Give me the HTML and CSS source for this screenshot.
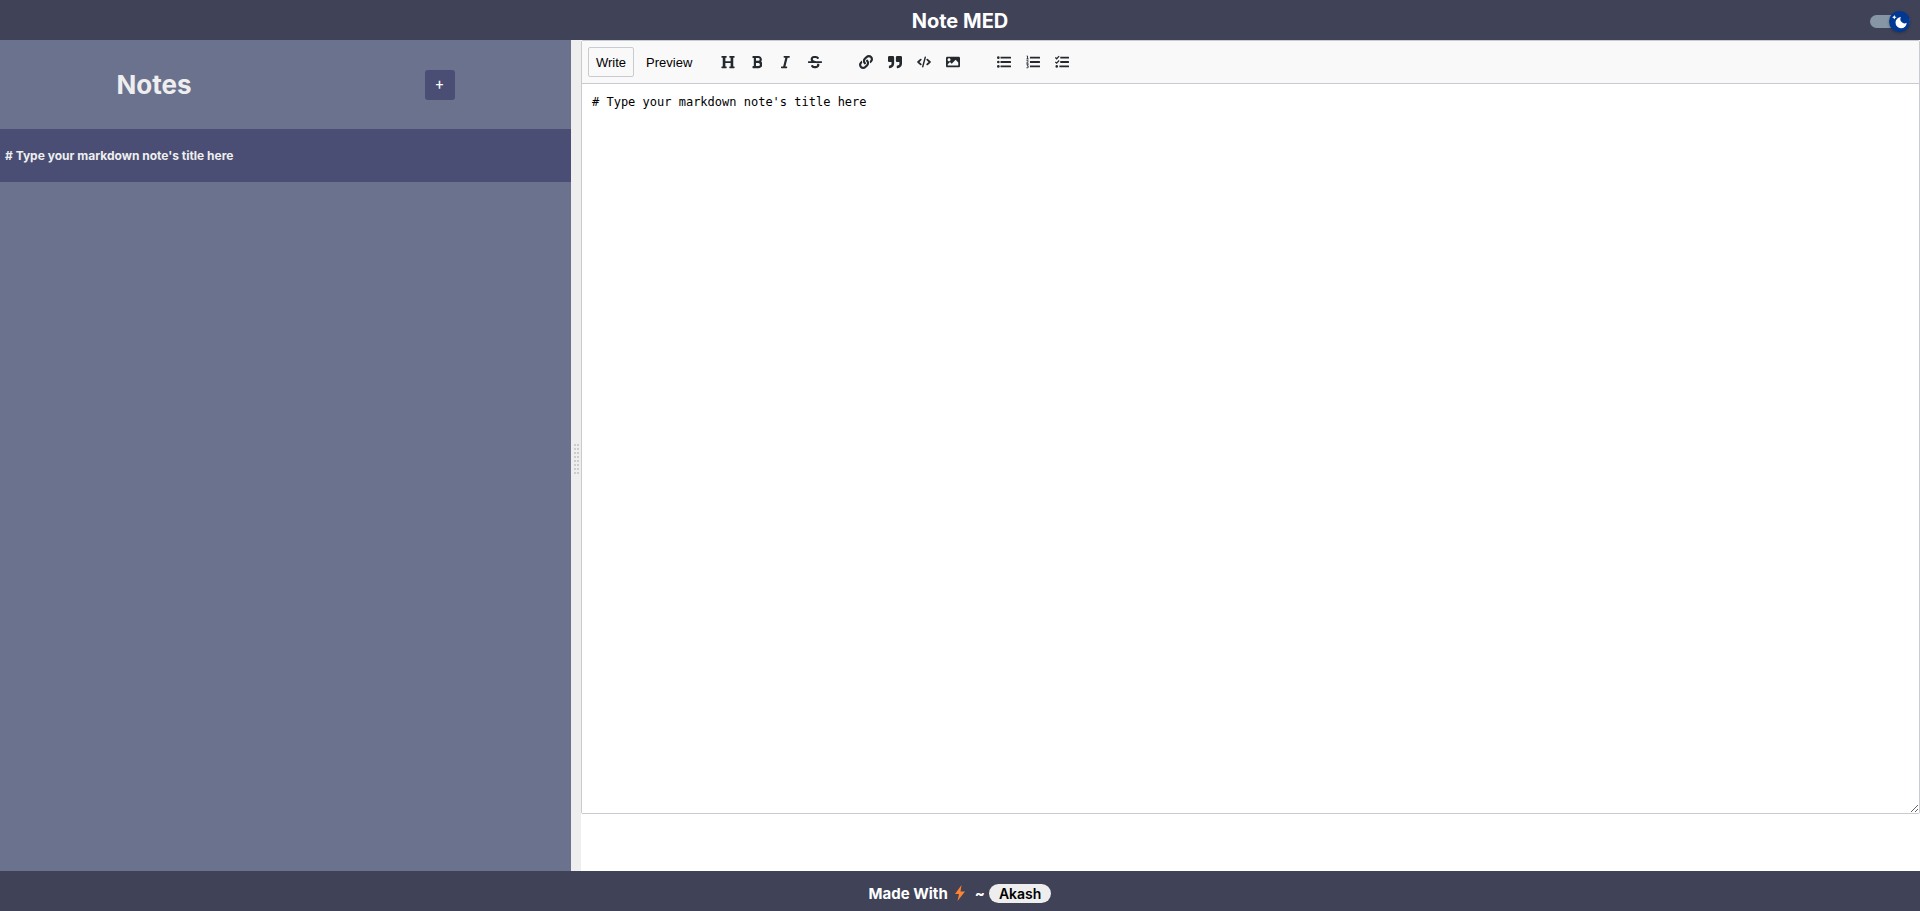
FILE: index.html
```html
<!DOCTYPE html>
<html lang="en">
<head>
<meta charset="utf-8">
<title>Note MED</title>
<link rel="stylesheet" href="styles.css">
</head>
<body>
<header class="topbar">
  <h1 class="brand">Note MED</h1>
  <label class="switch">
    <input class="switch-input" type="checkbox" checked aria-label="Dark mode">
    <span class="switch-thumb">
      <svg viewBox="0 0 20 20" width="20" height="20" aria-hidden="true"><path fill="#fff" d="M5.300 4l.7 1.600 1.600.7-1.600.7-.7 1.600-.7-1.600L3 6.300l1.600-.7zM12 6a4.200 4.200 0 0 0 5.700 5.800A5.600 5.600 0 1 1 12 6z"/></svg>
    </span>
  </label>
</header>
<main class="split">
  <aside class="sidebar">
    <div class="sidebar-head">
      <h2 class="sidebar-title">Notes</h2>
      <button class="new-note" type="button" aria-label="New note">+</button>
    </div>
    <button class="note" type="button">#&nbsp;Type your markdown note's title here</button>
  </aside>
  <div class="gutter" role="separator">
    <svg width="6" height="32" viewBox="0 0 6 32" aria-hidden="true"><path d="M1 0v32M4 0v32" stroke="#ccc" stroke-width="2" stroke-dasharray="2 2"/></svg>
  </div>
  <section class="pane">
    <div class="editor">
      <div class="toolbar">
        <div class="tabs">
          <button class="tab tab-active" type="button">Write</button>
          <button class="tab" type="button">Preview</button>
        </div>
        <div class="tools">
          <button class="tool" type="button" aria-label="Heading"><svg viewBox="0 0 512 512"><path d="M448 96v320h32a16 16 0 0 1 16 16v32a16 16 0 0 1-16 16H320a16 16 0 0 1-16-16v-32a16 16 0 0 1 16-16h32V288H160v128h32a16 16 0 0 1 16 16v32a16 16 0 0 1-16 16H32a16 16 0 0 1-16-16v-32a16 16 0 0 1 16-16h32V96H32a16 16 0 0 1-16-16V48a16 16 0 0 1 16-16h160a16 16 0 0 1 16 16v32a16 16 0 0 1-16 16h-32v128h192V96h-32a16 16 0 0 1-16-16V48a16 16 0 0 1 16-16h160a16 16 0 0 1 16 16v32a16 16 0 0 1-16 16z"/></svg></button>
          <button class="tool" type="button" aria-label="Bold"><svg viewBox="0 0 384 512"><path d="M333.49 238a122 122 0 0 0 27-65.21C367.87 96.49 308 32 233.42 32H34a16 16 0 0 0-16 16v48a16 16 0 0 0 16 16h31.87v288H34a16 16 0 0 0-16 16v48a16 16 0 0 0 16 16h209.32c70.8 0 134.14-51.75 141-122.4 4.74-48.45-16.39-92.06-50.83-119.6zM145.66 112h87.76a48 48 0 0 1 0 96h-87.76zm87.76 288h-87.76V288h87.76a56 56 0 0 1 0 112z"/></svg></button>
          <button class="tool" type="button" aria-label="Italic"><svg viewBox="0 0 320 512"><path d="M320 48v32a16 16 0 0 1-16 16h-62.76l-80 320H208a16 16 0 0 1 16 16v32a16 16 0 0 1-16 16H16a16 16 0 0 1-16-16v-32a16 16 0 0 1 16-16h62.76l80-320H112a16 16 0 0 1-16-16V48a16 16 0 0 1 16-16h192a16 16 0 0 1 16 16z"/></svg></button>
          <button class="tool" type="button" aria-label="Strikethrough"><svg viewBox="0 0 512 512"><path d="M496 224H293.9l-87.17-26.83A43.55 43.55 0 0 1 219.55 112h66.79A49.89 49.89 0 0 1 331 139.58a16 16 0 0 0 21.46 7.15l42.94-21.47a16 16 0 0 0 7.16-21.46l-.53-1A128 128 0 0 0 287.51 32h-68a123.68 123.68 0 0 0-123 135.64c2 20.89 10.1 39.83 21.78 56.36H16a16 16 0 0 0-16 16v32a16 16 0 0 0 16 16h480a16 16 0 0 0 16-16v-32a16 16 0 0 0-16-16zm-180.24 96A43 43 0 0 1 336 356.45 43.59 43.59 0 0 1 292.45 400h-66.79A49.89 49.89 0 0 1 181 372.42a16 16 0 0 0-21.46-7.15l-42.94 21.47a16 16 0 0 0-7.16 21.46l.53 1A128 128 0 0 0 224.49 480h68a123.68 123.68 0 0 0 123-135.64 114.25 114.25 0 0 0-5.34-24.36z"/></svg></button>
        </div>
        <div class="tools">
          <button class="tool" type="button" aria-label="Link"><svg viewBox="0 0 512 512"><path d="M326.612 185.391c59.747 59.809 58.927 155.698.36 214.59-.11.12-.24.25-.36.37l-67.2 67.2c-59.27 59.27-155.699 59.262-214.96 0-59.27-59.26-59.27-155.7 0-214.96l37.106-37.106c9.84-9.84 26.786-3.3 27.294 10.606.648 17.722 3.826 35.527 9.69 52.721 1.986 5.822.567 12.262-3.783 16.612l-13.087 13.087c-28.026 28.026-28.905 73.66-1.155 101.96 28.024 28.579 74.086 28.749 102.325.51l67.2-67.19c28.191-28.191 28.073-73.757 0-101.83-3.701-3.694-7.429-6.564-10.341-8.569a16.037 16.037 0 0 1-6.947-12.606c-.396-10.567 3.348-21.456 11.698-29.806l21.054-21.055c5.521-5.521 14.182-6.199 20.584-1.731a152.482 152.482 0 0 1 20.522 17.197zM467.547 44.449c-59.261-59.262-155.69-59.27-214.96 0l-67.2 67.2c-.12.12-.25.25-.36.37-58.566 58.892-59.387 154.781.36 214.59a152.454 152.454 0 0 0 20.521 17.196c6.402 4.468 15.064 3.789 20.584-1.731l21.054-21.055c8.35-8.35 12.094-19.239 11.698-29.806a16.037 16.037 0 0 0-6.947-12.606c-2.912-2.005-6.64-4.875-10.341-8.569-28.073-28.073-28.191-73.639 0-101.83l67.2-67.19c28.239-28.239 74.3-28.069 102.325.51 27.75 28.3 26.872 73.934-1.155 101.96l-13.087 13.087c-4.35 4.35-5.769 10.79-3.783 16.612 5.864 17.194 9.042 34.999 9.69 52.721.509 13.906 17.454 20.446 27.294 10.606l37.106-37.106c59.271-59.259 59.271-155.699.001-214.959z"/></svg></button>
          <button class="tool" type="button" aria-label="Quote"><svg viewBox="0 0 512 512"><path d="M464 32H336c-26.5 0-48 21.5-48 48v128c0 26.5 21.5 48 48 48h80v64c0 35.3-28.7 64-64 64h-8c-13.3 0-24 10.7-24 24v48c0 13.3 10.7 24 24 24h8c88.4 0 160-71.6 160-160V80c0-26.5-21.5-48-48-48zm-288 0H48C21.5 32 0 53.5 0 80v128c0 26.5 21.5 48 48 48h80v64c0 35.3-28.7 64-64 64h-8c-13.3 0-24 10.7-24 24v48c0 13.3 10.7 24 24 24h8c88.4 0 160-71.6 160-160V80c0-26.5-21.5-48-48-48z"/></svg></button>
          <button class="tool" type="button" aria-label="Code"><svg viewBox="0 0 640 512"><path fill="none" stroke="#24292e" stroke-width="80" stroke-linecap="round" stroke-linejoin="round" d="M170 145L50 256l120 111M470 145l120 111-120 111"/><path fill="none" stroke="#24292e" stroke-width="64" stroke-linecap="round" d="M378 40L262 472"/></svg></button>
          <button class="tool" type="button" aria-label="Image"><svg viewBox="0 0 512 512"><path fill-rule="evenodd" d="M464 448H48c-26.51 0-48-21.49-48-48V112c0-26.51 21.49-48 48-48h416c26.51 0 48 21.49 48 48v288c0 26.51-21.49 48-48 48zM112 120c-30.928 0-56 25.072-56 56s25.072 56 56 56 56-25.072 56-56-25.072-56-56-56zM64 384h384V272l-87.515-87.515c-4.686-4.686-12.284-4.686-16.971 0L208 320l-55.515-55.515c-4.686-4.686-12.284-4.686-16.971 0L64 336v48z"/></svg></button>
        </div>
        <div class="tools">
          <button class="tool" type="button" aria-label="Bulleted list"><svg viewBox="0 0 512 512"><circle cx="48" cy="96" r="48"/><circle cx="48" cy="256" r="48"/><circle cx="48" cy="416" r="48"/><path d="M128 60h368a16 16 0 0 1 16 16v40a16 16 0 0 1-16 16H128zM128 220h368a16 16 0 0 1 16 16v40a16 16 0 0 1-16 16H128zM128 380h368a16 16 0 0 1 16 16v40a16 16 0 0 1-16 16H128z"/></svg></button>
          <button class="tool" type="button" aria-label="Numbered list"><svg viewBox="0 0 512 512"><path d="M144 60h352a16 16 0 0 1 16 16v40a16 16 0 0 1-16 16H144zM144 220h352a16 16 0 0 1 16 16v40a16 16 0 0 1-16 16H144zM144 380h352a16 16 0 0 1 16 16v40a16 16 0 0 1-16 16H144z"/><path fill="none" stroke="#24292e" stroke-width="34" d="M24 36h32v108M16 144h80M18 208q60-32 62 8 0 24-60 86h72M20 354h64l-36 48q44 0 40 36-8 48-70 28"/></svg></button>
          <button class="tool" type="button" aria-label="Task list"><svg viewBox="0 0 512 512"><circle cx="64" cy="416" r="46"/><path d="M192 60h304a16 16 0 0 1 16 16v40a16 16 0 0 1-16 16H192zM192 220h304a16 16 0 0 1 16 16v40a16 16 0 0 1-16 16H192zM160 380h336a16 16 0 0 1 16 16v40a16 16 0 0 1-16 16H160z"/><path fill="none" stroke="#24292e" stroke-width="46" d="M12 92l48 46 92-96M12 252l48 46 92-96"/></svg></button>
        </div>
      </div>
      <textarea class="text" aria-label="Note text" spellcheck="false"># Type your markdown note's title here</textarea>
    </div>
  </section>
</main>
<footer class="footer">
  <span>Made With</span>
  <svg class="bolt" viewBox="0 0 10 16" width="10" height="16" aria-hidden="true"><path fill="#fb8332" d="M6.500 0L0 9h4l-1.500 7L10 6.500H5.500z"/></svg>
  <span class="tilde">~</span>
  <a class="author" href="#">Akash</a>
</footer>
</body>
</html>
```
FILE: styles.css
```css
* { box-sizing: border-box; }

body {
  margin: 0;
  min-height: 100vh;
  display: grid;
  grid-template-rows: 40px 1fr 40px;
  font-family: Inter, "Liberation Sans", sans-serif;
  background: #fff;
}

button { font-family: inherit; cursor: pointer; }

.topbar {
  display: grid;
  grid-template-columns: 1fr auto 1fr;
  align-items: center;
  padding: 2px 10px 0;
  background: #404258;
  color: #fff;
}

.brand {
  grid-column: 2;
  margin: 0;
  font-size: 20px;
  font-weight: 700;
  line-height: 24px;
}

.switch {
  justify-self: end;
  position: relative;
  display: flex;
  align-items: center;
  width: 40px;
  height: 20px;
}

.switch-input {
  appearance: none;
  width: 40px;
  height: 13px;
  margin: 0;
  border-radius: 10px;
  background: #8796a5;
}

.switch-thumb {
  position: absolute;
  top: 0;
  right: 0;
  width: 21px;
  height: 21px;
  border-radius: 50%;
  background: #003892;
  box-shadow: 0 1px 3px rgba(0, 0, 0, 0.3);
}

.switch-thumb svg { display: block; }

.split { display: flex; }

.sidebar {
  flex: 0 0 calc(30% - 5px);
  background: #6b728e;
}

.sidebar-head {
  display: flex;
  align-items: center;
  justify-content: space-around;
  height: 89px;
}

.sidebar-title {
  margin: 0;
  color: #eee;
  font-size: 26px;
  font-weight: 700;
  line-height: 32px;
}

.new-note {
  width: 30px;
  height: 30px;
  padding: 0;
  border: 0;
  border-radius: 3px;
  background: #4a4e74;
  color: #fff;
  font-family: Roboto, sans-serif;
  font-size: 14px;
}

.note {
  display: block;
  width: 100%;
  height: 53px;
  padding: 0 5px;
  border: 0;
  background: #4a4e74;
  color: #eee;
  font-size: 12px;
  font-weight: 700;
  text-align: left;
}

.gutter {
  flex: 0 0 10px;
  display: flex;
  align-items: center;
  justify-content: flex-end;
  padding: 8px 1px 0 0;
  background: #eee;
  cursor: col-resize;
}

.pane { flex: 1; min-width: 0; }

.editor {
  border: 1px solid #c8ccd0;
  border-radius: 2px;
}

.toolbar {
  display: flex;
  align-items: center;
  height: 43px;
  padding: 0 6px;
  border-bottom: 1px solid #c8ccd0;
  background: #f9f9f9;
}

.tabs { display: flex; gap: 4px; margin-right: 13px; }

.tab {
  height: 30px;
  padding: 0 7px;
  border: 1px solid transparent;
  border-radius: 2px;
  background: none;
  color: #000;
  font-family: "Liberation Sans", Arial, sans-serif;
  font-size: 13px;
}

.tab-active { border-color: #c8ccd0; }

.tools { display: flex; margin-right: 22px; }

.tool {
  display: flex;
  align-items: center;
  justify-content: center;
  width: 29px;
  height: 30px;
  padding: 0;
  border: 0;
  background: none;
}

.tool svg { height: 14px; max-width: 14px; fill: #24292e; }

.text {
  display: block;
  width: 100%;
  height: 80vh;
  padding: 10px;
  border: 0;
  outline: 0;
  resize: vertical;
  background: #fff;
  color: #000;
  font-family: "DejaVu Sans Mono", monospace;
  font-size: 12px;
  line-height: 16px;
}

.footer {
  display: flex;
  align-items: center;
  justify-content: center;
  padding-top: 4px;
  background: #404258;
  color: #fff;
  font-size: 15px;
  font-weight: 700;
}

.bolt { margin: 0 10px 0 7px; }

.tilde { margin-right: 4px; }

.author {
  padding: 0 10px;
  border-radius: 10px;
  background: #eee;
  color: #000;
  font-size: 14px;
  font-weight: 600;
  line-height: 19px;
  text-decoration: none;
}
```
